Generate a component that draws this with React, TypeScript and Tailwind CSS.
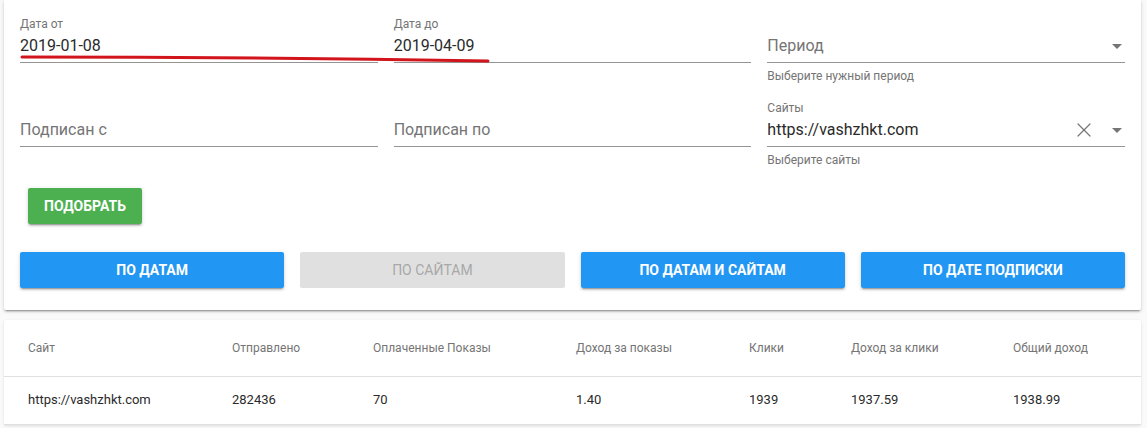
import { X } from 'lucide-react'

type FieldProps = {
  label?: string
  value?: string
  placeholder?: string
  hint?: string
  select?: boolean
  clearable?: boolean
}

function Arrow() {
  return (
    <svg width="10" height="5" viewBox="0 0 10 5" className="ml-4 mr-[3px]">
      <path d="M0 0 L10 0 L5 5 Z" fill="#757575" />
    </svg>
  )
}

function Field({ label, value, placeholder, hint, select, clearable }: FieldProps) {
  return (
    <div className="flex flex-col">
      <div className="h-[14px] text-[12px] leading-[14px] text-[#757575]">{label}</div>
      <div className="mt-[3px] flex items-center border-b border-[#949494] pb-[4px]">
        <div className="flex-1 text-[16px] leading-6">
          {value ? (
            <span className="text-[#2a2a2a]">{value}</span>
          ) : (
            <span className="text-[#757575]">{placeholder}</span>
          )}
        </div>
        {clearable && <X size={24} strokeWidth={1.2} className="text-[#757575]" />}
        {select && <Arrow />}
      </div>
      <div className="mt-[7px] h-[12px] text-[12px] leading-[12px] text-[#757575]">{hint}</div>
    </div>
  )
}

const cols = [
  { title: 'Сайт', w: 'w-[204px]' },
  { title: 'Отправлено', w: 'w-[141px]' },
  { title: 'Оплаченные Показы', w: 'w-[203px]' },
  { title: 'Доход за показы', w: 'w-[173px]' },
  { title: 'Клики', w: 'w-[102px]' },
  { title: 'Доход за клики', w: 'w-[162px]' },
  { title: 'Общий доход', w: 'w-[152px]' },
]

const rows = [['https://vashzhkt.com', '282436', '70', '1.40', '1939', '1937.59', '1938.99']]

function App() {
  return (
    <div className="min-h-screen bg-[#fafafa] pl-1 pr-[6px] font-['Roboto',sans-serif]">
      {/* Filters card */}
      <div className="relative rounded-b-[2px] bg-white px-4 pb-[22px] pt-[17px] shadow-[0_3px_1px_-2px_rgba(0,0,0,0.2),0_2px_2px_0_rgba(0,0,0,0.14),0_1px_5px_0_rgba(0,0,0,0.12)]">
        <div className="grid grid-cols-3 gap-x-4 gap-y-[19px]">
          <Field label="Дата от" value="2019-01-08" />
          <Field label="Дата до" value="2019-04-09" />
          <Field placeholder="Период" hint="Выберите нужный период" select />
          <Field placeholder="Подписан с" />
          <Field placeholder="Подписан по" />
          <Field label="Сайты" value="https://vashzhkt.com" hint="Выберите сайты" select clearable />
        </div>

        <button className="ml-2 mt-[22px] h-9 rounded-[2px] bg-[#4caf50] px-4 text-[14px] font-bold uppercase text-white shadow-[0_3px_1px_-2px_rgba(0,0,0,0.2),0_2px_2px_0_rgba(0,0,0,0.14),0_1px_5px_0_rgba(0,0,0,0.12)]">
          Подобрать
        </button>

        <div className="mt-7 grid grid-cols-4 gap-4">
          <button className="h-9 rounded-[2px] bg-[#2196f3] text-[14px] font-bold uppercase text-white shadow-[0_3px_1px_-2px_rgba(0,0,0,0.2),0_2px_2px_0_rgba(0,0,0,0.14),0_1px_5px_0_rgba(0,0,0,0.12)]">
            По датам
          </button>
          <button className="h-9 rounded-[2px] bg-[#e0e0e0] text-[14px] font-normal uppercase text-[#a8a8a8]">
            По сайтам
          </button>
          <button className="h-9 rounded-[2px] bg-[#2196f3] text-[14px] font-bold uppercase text-white shadow-[0_3px_1px_-2px_rgba(0,0,0,0.2),0_2px_2px_0_rgba(0,0,0,0.14),0_1px_5px_0_rgba(0,0,0,0.12)]">
            По датам и сайтам
          </button>
          <button className="h-9 rounded-[2px] bg-[#2196f3] text-[14px] font-bold uppercase text-white shadow-[0_3px_1px_-2px_rgba(0,0,0,0.2),0_2px_2px_0_rgba(0,0,0,0.14),0_1px_5px_0_rgba(0,0,0,0.12)]">
            По дате подписки
          </button>
        </div>

        {/* hand-drawn red underline annotation */}
        <svg className="pointer-events-none absolute left-0 top-0" width="500" height="70">
          <path d="M18 57 Q 250 57 484 61" stroke="#d2141c" strokeWidth="3" fill="none" strokeLinecap="round" />
        </svg>
      </div>

      {/* Results table */}
      <div className="mt-[10px] rounded-[2px] bg-white shadow-[0_1px_3px_0_rgba(0,0,0,0.12)]">
        <table className="w-full table-fixed border-collapse">
          <thead>
            <tr className="h-14 border-b border-[#e0e0e0]">
              {cols.map((c) => (
                <th key={c.title} className={`${c.w} px-6 text-left text-[12px] font-normal text-[#757575]`}>
                  {c.title}
                </th>
              ))}
            </tr>
          </thead>
          <tbody>
            {rows.map((r) => (
              <tr key={r[0]} className="h-12 border-b border-[#e0e0e0]">
                {r.map((v, i) => (
                  <td key={i} className="px-6 text-[13px] text-[#2a2a2a]">
                    {v}
                  </td>
                ))}
              </tr>
            ))}
          </tbody>
        </table>
      </div>
    </div>
  )
}

export default App
